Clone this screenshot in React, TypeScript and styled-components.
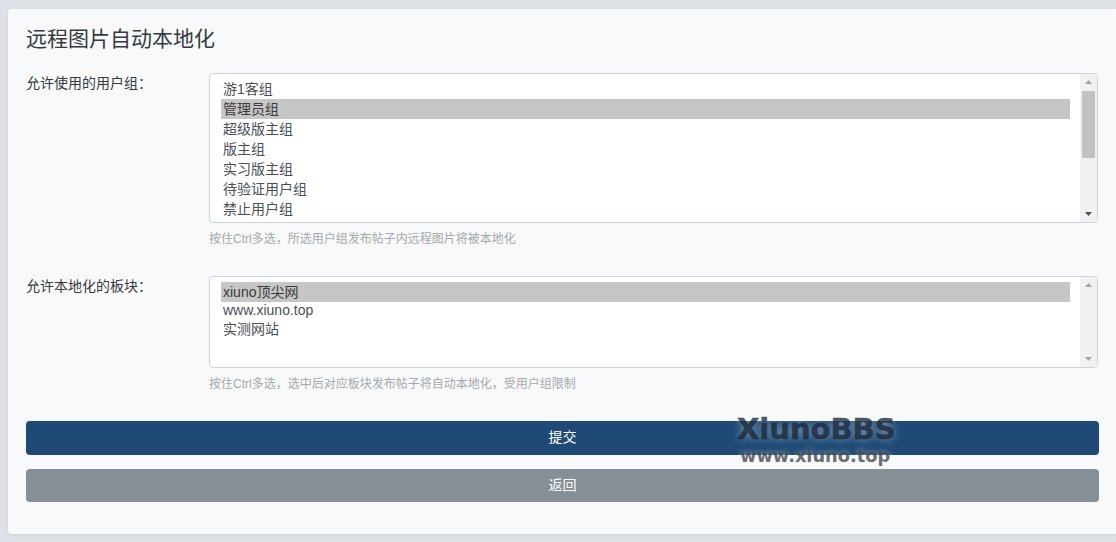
import React from 'react';
import styled, { createGlobalStyle } from 'styled-components';

const GlobalStyle = createGlobalStyle`
  html, body {
    margin: 0;
    padding: 0;
    background: #dee2e6;
    overflow: hidden;
  }
  body {
    font-family: "Liberation Sans", "Noto Sans CJK SC", sans-serif;
    font-size: 14px;
    color: #343a40;
  }
`;

const Page = styled.div`
  height: 542px;
  padding: 9px 0 0 8px;
  box-sizing: border-box;
`;

const Card = styled.div`
  position: relative;
  height: 525px;
  box-sizing: border-box;
  padding: 16px 17px 0 18px;
  background: #f8f9fa;
  border-radius: 4px 0 0 4px;
  box-shadow: 0 1px 3px rgba(0, 0, 0, 0.08);
`;

const Title = styled.h4`
  margin: 0 0 19px;
  height: 29px;
  font-size: 21px;
  line-height: 27px;
  font-weight: 400;
  color: #343a40;
`;

const FormRow = styled.div<{ $gap: number }>`
  display: grid;
  grid-template-columns: 183px 889px;
  margin-bottom: ${(p) => p.$gap}px;
`;

const FieldLabel = styled.label`
  font-size: 14px;
  line-height: 20px;
  color: #343a40;
`;

const SelectBox = styled.div<{ $height: number }>`
  display: flex;
  height: ${(p) => p.$height}px;
  box-sizing: border-box;
  border: 1px solid #ced4da;
  border-radius: 4px;
  background: #fff;
  overflow: hidden;
`;

const OptionList = styled.div`
  flex: 1;
  padding: 5px 10px 0 11px;
`;

const Option = styled.div<{ $selected?: boolean; $latin?: boolean }>`
  height: ${(p) => (p.$latin ? 17 : 20)}px;
  line-height: ${(p) => (p.$latin ? 17 : 20)}px;
  padding-left: 2px;
  font-size: 14px;
  white-space: nowrap;
  color: ${(p) => (p.$selected ? '#3a3a3a' : '#495057')};
  background: ${(p) => (p.$selected ? '#c6c6c6' : 'transparent')};
`;

const ScrollTrack = styled.div`
  display: flex;
  flex-direction: column;
  align-items: center;
  width: 17px;
  background: #f1f1f1;
`;

const ScrollArrow = styled.svg<{ $dark?: boolean }>`
  flex: none;
  width: 17px;
  height: 17px;
  fill: ${(p) => (p.$dark ? '#505050' : '#a3a3a3')};
`;

const ScrollThumb = styled.div`
  width: 13px;
  height: 67px;
  background: #c1c1c1;
`;

const ScrollFill = styled.div`
  flex: 1;
`;

const Hint = styled.div`
  margin-top: 8px;
  height: 16px;
  font-size: 12px;
  line-height: 16px;
  color: #a3a9ae;
`;

const ActionButton = styled.button<{ $variant: 'primary' | 'secondary' }>`
  display: block;
  width: 1073px;
  height: ${(p) => (p.$variant === 'primary' ? 34 : 33)}px;
  margin: 0 0 14px;
  padding: 0 0 ${(p) => (p.$variant === 'primary' ? 5 : 3)}px;
  border: 0;
  border-radius: 4px;
  font-family: inherit;
  font-size: 14px;
  color: #fff;
  background: ${(p) => (p.$variant === 'primary' ? '#1e4a75' : '#868e96')};
`;

const Watermark = styled.div`
  position: absolute;
  left: 729px;
  top: 404px;
  font-family: "DejaVu Sans", sans-serif;
  font-weight: 700;
  white-space: nowrap;
  pointer-events: none;
`;

const WatermarkName = styled.div`
  font-size: 29px;
  line-height: 32px;
  color: rgba(24, 38, 56, 0.75);
  text-shadow: 0 0 8px rgba(255, 255, 255, 0.45);
  -webkit-text-stroke: 0.5px rgba(24, 38, 56, 0.75);
`;

const WatermarkUrl = styled.div`
  margin: 2px 0 0 3px;
  font-size: 17.8px;
  line-height: 17px;
  color: rgba(66, 70, 76, 0.8);
  text-shadow: 0 0 5px rgba(255, 255, 255, 0.5);
`;

const ArrowUp = () => (
  <ScrollArrow viewBox="0 0 17 17">
    <path d="M8.5 6 L12 10 L5 10 Z" />
  </ScrollArrow>
);

const ArrowDown = ({ dark }: { dark?: boolean }) => (
  <ScrollArrow viewBox="0 0 17 17" $dark={dark}>
    <path d="M5 7 L12 7 L8.5 11 Z" />
  </ScrollArrow>
);

const userGroups = ['游1客组', '管理员组', '超级版主组', '版主组', '实习版主组', '待验证用户组', '禁止用户组'];

export default function App() {
  return (
    <Page>
      <GlobalStyle />
      <Card>
        <Title>远程图片自动本地化</Title>

        <FormRow $gap={29}>
          <FieldLabel>允许使用的用户组：</FieldLabel>
          <div>
            <SelectBox $height={150}>
              <OptionList>
                {userGroups.map((g) => (
                  <Option key={g} $selected={g === '管理员组'}>
                    {g}
                  </Option>
                ))}
              </OptionList>
              <ScrollTrack>
                <ArrowUp />
                <ScrollThumb />
                <ScrollFill />
                <ArrowDown dark />
              </ScrollTrack>
            </SelectBox>
            <Hint>按住Ctrl多选，所选用户组发布帖子内远程图片将被本地化</Hint>
          </div>
        </FormRow>

        <FormRow $gap={29}>
          <FieldLabel>允许本地化的板块：</FieldLabel>
          <div>
            <SelectBox $height={92}>
              <OptionList>
                <Option $selected>xiuno顶尖网</Option>
                <Option $latin>www.xiuno.top</Option>
                <Option>实测网站</Option>
              </OptionList>
              <ScrollTrack>
                <ArrowUp />
                <ScrollFill />
                <ArrowDown />
              </ScrollTrack>
            </SelectBox>
            <Hint>按住Ctrl多选，选中后对应板块发布帖子将自动本地化，受用户组限制</Hint>
          </div>
        </FormRow>

        <ActionButton $variant="primary">提交</ActionButton>
        <ActionButton $variant="secondary">返回</ActionButton>

        <Watermark>
          <WatermarkName>XiunoBBS</WatermarkName>
          <WatermarkUrl>www.xiuno.top</WatermarkUrl>
        </Watermark>
      </Card>
    </Page>
  );
}
